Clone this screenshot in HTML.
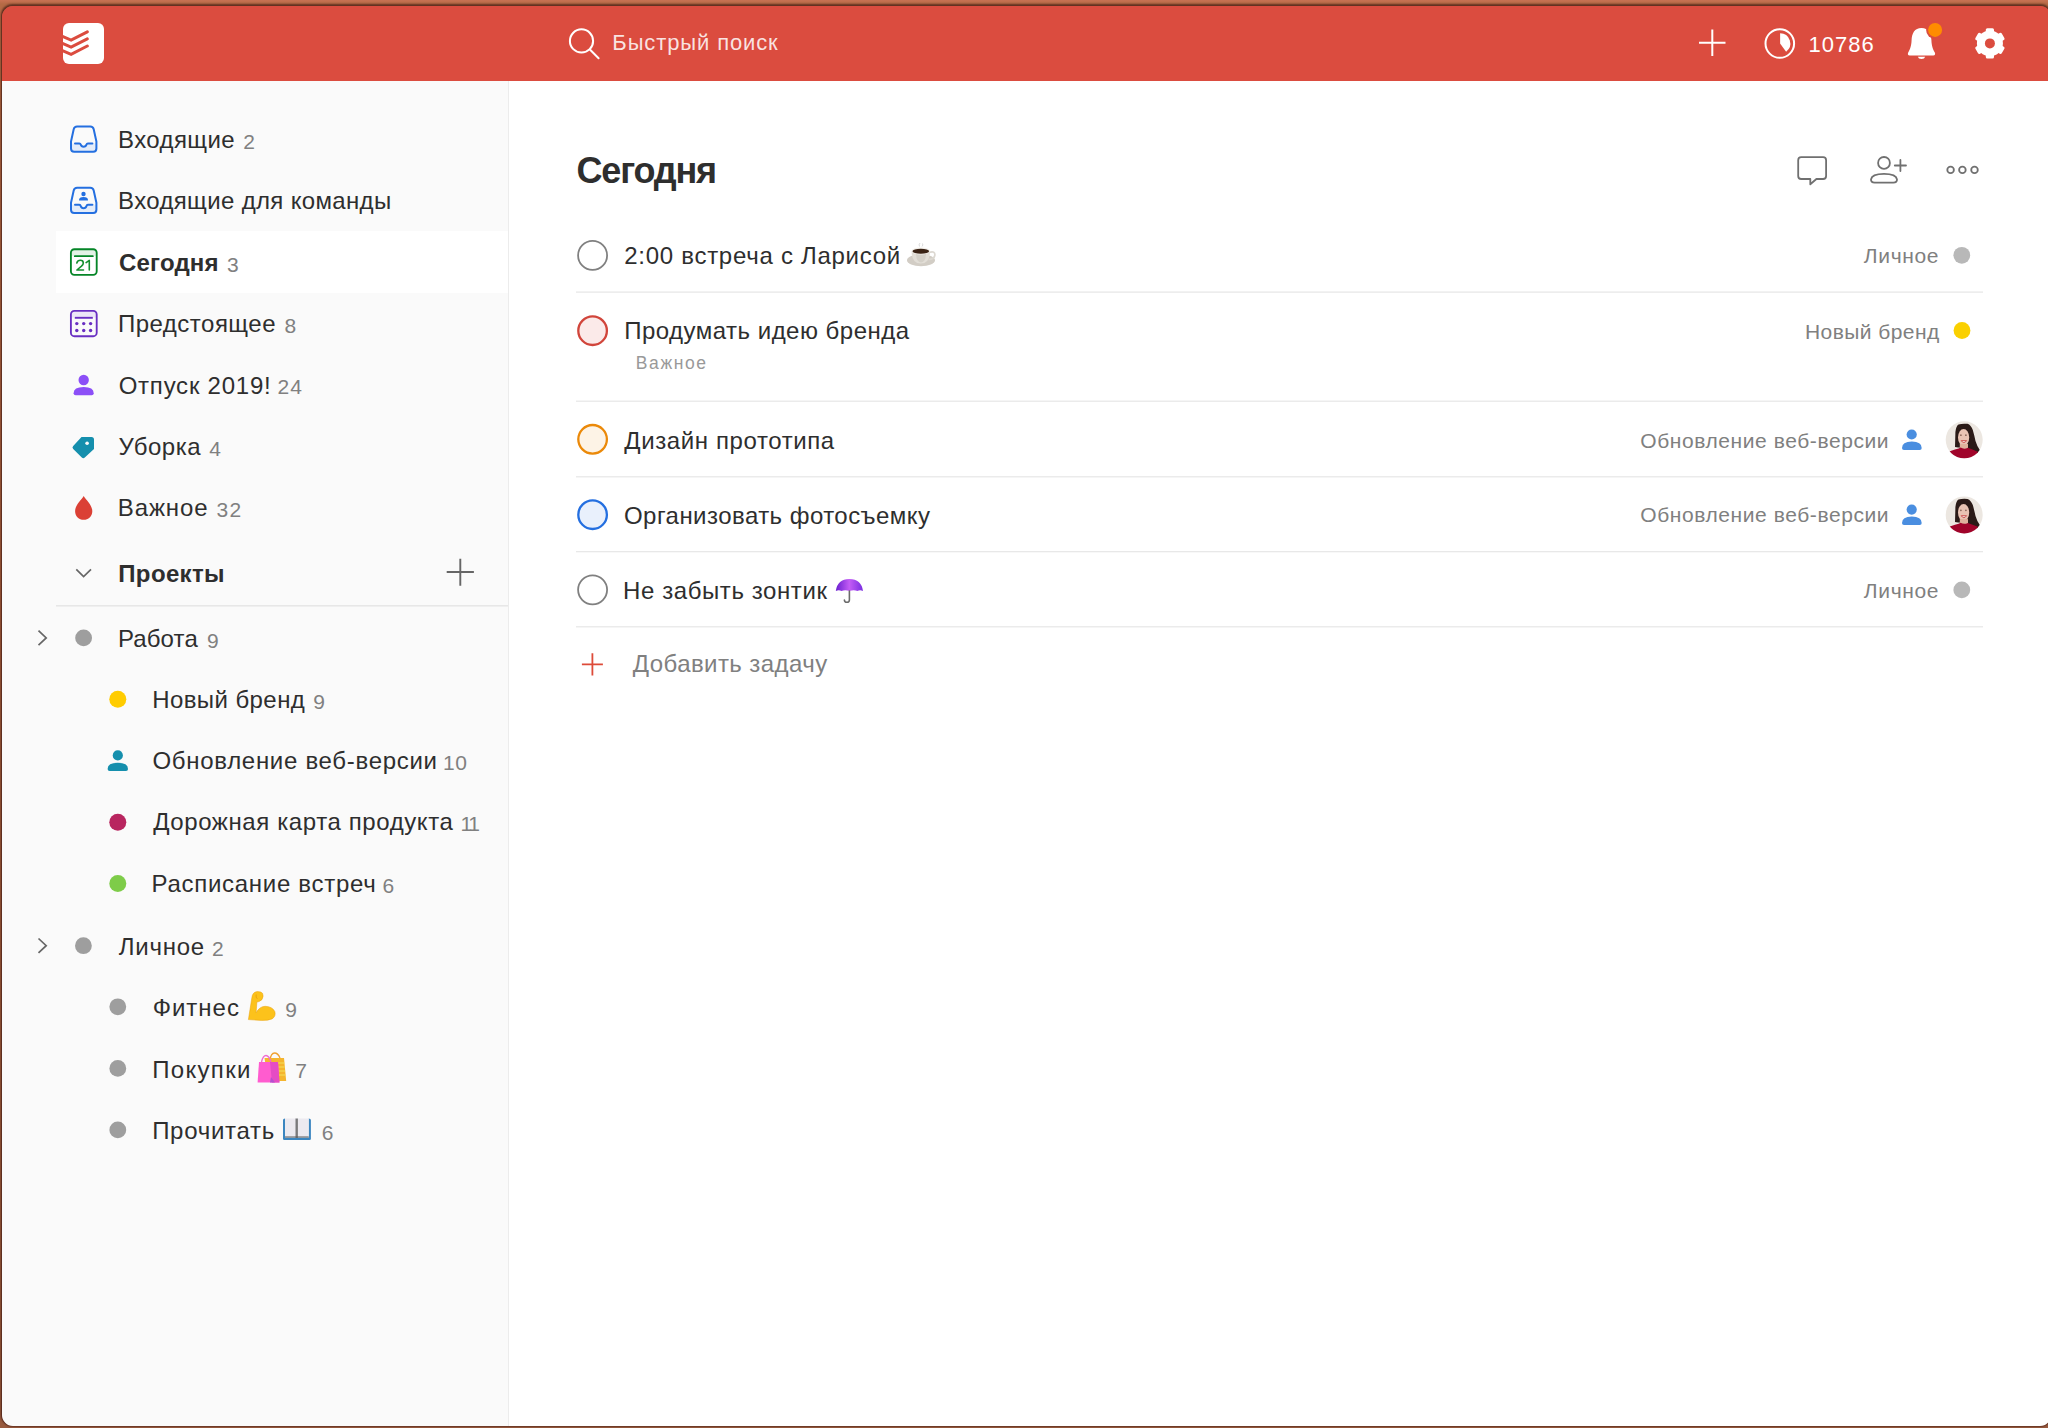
<!DOCTYPE html>
<html lang="ru">
<head>
<meta charset="utf-8">
<title>Todoist — Сегодня</title>
<style>
html,body{margin:0;padding:0;}
body{width:2048px;height:1428px;overflow:hidden;position:relative;
  background:linear-gradient(180deg,#c97253 0px,#b56a45 4px,#9e5a3c 700px,#985a3e 1428px);
  font-family:"Liberation Sans",sans-serif;}
.win{position:absolute;left:1.5px;top:6px;width:2049px;height:1419.5px;border-radius:11px;overflow:hidden;
  box-shadow:0 -1px 2px 0.5px rgba(70,30,20,0.75),0 1px 1px rgba(70,30,20,0.35),-1px 0 1px rgba(70,30,20,0.35);}
.main{position:absolute;left:507.5px;top:75px;width:1541px;height:1345px;background:#ffffff;}
.hdr{position:absolute;left:0;top:0;width:2049px;height:75px;background:#db4c3f;}
.side{position:absolute;left:0;top:75px;width:506.5px;height:1345px;background:#fafafa;border-right:1px solid #ececec;}
.sel{position:absolute;left:54.5px;top:150.3px;width:452px;height:61.7px;background:#ffffff;}
.t{position:absolute;white-space:nowrap;font-family:"Liberation Sans",sans-serif;}
svg.ic{position:absolute;left:0;top:0;overflow:visible;}
</style>
</head>
<body>
<div class="win">
  <div class="hdr"></div>
  <div class="main"></div>
  <div class="side"><div class="sel"></div></div>
</div>
<svg class="ic" width="2048" height="1428" viewBox="0 0 2048 1428">
  <defs>
    <clipPath id="logoclip"><rect x="63" y="23" width="41" height="41" rx="6"/></clipPath>
    <clipPath id="av1"><circle cx="1964.2" cy="439.8" r="18.5"/></clipPath>
    <clipPath id="av2"><circle cx="1964.2" cy="514.9" r="18.5"/></clipPath>
    <linearGradient id="umb" x1="0" y1="0" x2="1" y2="0">
      <stop offset="0" stop-color="#6a1fd0"/><stop offset="0.5" stop-color="#c35cf5"/><stop offset="1" stop-color="#7a2ee0"/>
    </linearGradient>
  </defs>

  <!-- ===== header ===== -->
  <rect x="63" y="23" width="41" height="41" rx="6" fill="#ffffff"/>
  <g clip-path="url(#logoclip)" fill="none" stroke="#db4c3f" stroke-width="3" stroke-linecap="round" stroke-linejoin="miter">
    <path d="M58 34.5 L71.1 40.1 L87.3 31.8"/>
    <path d="M58 41.6 L71.1 47.2 L87.3 38.9"/>
    <path d="M58 48.7 L71.1 54.3 L87.3 46"/>
  </g>
  <!-- search -->
  <g fill="none" stroke="#ffffff" stroke-width="2">
    <circle cx="581.5" cy="40.9" r="11.6"/>
    <path d="M589.9 49.5 L598.6 58.2" stroke-linecap="round"/>
  </g>
  <!-- plus -->
  <g stroke="#ffffff" stroke-width="2">
    <path d="M1712.3 29.5 V56 M1699 42.7 H1725.5"/>
  </g>
  <!-- karma -->
  <circle cx="1779.8" cy="43.5" r="14.3" fill="none" stroke="#ffffff" stroke-width="2"/>
  <path d="M1780.1 43.6 V33.3 A10.2 10.2 0 0 1 1786.1 51.7 Z" fill="#ffffff"/>
  <!-- bell -->
  <path d="M1921.5 27.9 C1914.5 27.9 1911.8 33.5 1911.6 40 C1911.4 46 1910 49.5 1908.3 52.2 C1907.4 53.7 1907.9 55.4 1909.7 55.4 L1933.3 55.4 C1935.1 55.4 1935.6 53.7 1934.7 52.2 C1933 49.5 1931.6 46 1931.4 40 C1931.2 33.5 1928.5 27.9 1921.5 27.9 Z" fill="#ffffff"/>
  <path d="M1917.8 56.8 A3.8 3 0 0 0 1925.2 56.8 Z" fill="#ffffff"/>
  <circle cx="1935.1" cy="29.9" r="9" fill="#db4c3f"/>
  <circle cx="1935.1" cy="29.9" r="7" fill="#ff8c00"/>
  <!-- gear -->
  <g fill="#ffffff">
    <circle cx="1989.9" cy="43.4" r="13"/>
    <rect x="1985.8" y="28.2" width="8.2" height="30.4" rx="1.5"/>
    <rect x="1985.8" y="28.2" width="8.2" height="30.4" rx="1.5" transform="rotate(60 1989.9 43.4)"/>
    <rect x="1985.8" y="28.2" width="8.2" height="30.4" rx="1.5" transform="rotate(120 1989.9 43.4)"/>
  </g>
  <circle cx="1989.9" cy="43.4" r="5" fill="#db4c3f"/>

  <!-- ===== sidebar icons ===== -->
  <!-- inbox -->
  <g transform="translate(69.5 125)">
    <path d="M1.5 18.5 H9.8 Q10.9 18.5 11.2 19.6 A3 3 0 0 0 17 19.6 Q17.3 18.5 18.4 18.5 H26.9 V23.5 Q26.9 26.75 23.7 26.75 H4.7 Q1.5 26.75 1.5 23.5 Z" fill="#e4ecf9"/>
    <path d="M1.5 16.5 L4.2 4.2 Q4.8 1.4 7.6 1.4 H20.8 Q23.6 1.4 24.2 4.2 L26.9 16.5 V23.5 Q26.9 26.75 23.7 26.75 H4.7 Q1.5 26.75 1.5 23.5 Z" fill="none" stroke="#246fe0" stroke-width="2" stroke-linejoin="round"/>
    <path d="M5.5 18.5 H9.8 Q10.9 18.5 11.2 19.6 A3 3 0 0 0 17 19.6 Q17.3 18.5 18.4 18.5 H22.9" fill="none" stroke="#246fe0" stroke-width="2" stroke-linecap="round"/>
  </g>
  <!-- team inbox -->
  <g transform="translate(69.5 186.3)">
    <path d="M1.5 18.5 H9.8 Q10.9 18.5 11.2 19.6 A3 3 0 0 0 17 19.6 Q17.3 18.5 18.4 18.5 H26.9 V23.5 Q26.9 26.75 23.7 26.75 H4.7 Q1.5 26.75 1.5 23.5 Z" fill="#e4ecf9"/>
    <path d="M1.5 16.5 L4.2 4.2 Q4.8 1.4 7.6 1.4 H20.8 Q23.6 1.4 24.2 4.2 L26.9 16.5 V23.5 Q26.9 26.75 23.7 26.75 H4.7 Q1.5 26.75 1.5 23.5 Z" fill="none" stroke="#246fe0" stroke-width="2" stroke-linejoin="round"/>
    <path d="M5.5 18.5 H9.8 Q10.9 18.5 11.2 19.6 A3 3 0 0 0 17 19.6 Q17.3 18.5 18.4 18.5 H22.9" fill="none" stroke="#246fe0" stroke-width="2" stroke-linecap="round"/>
    <circle cx="14" cy="7.7" r="2.2" fill="#246fe0"/>
    <path d="M9.5 13.8 Q9.5 10.6 14 10.6 Q18.5 10.6 18.5 13.8 Q18.5 14.3 18 14.3 H10 Q9.5 14.3 9.5 13.8 Z" fill="#246fe0"/>
  </g>
  <!-- today -->
  <g transform="translate(69.5 248)">
    <path d="M2 2 H26.5 V8 H2 Z" fill="#e3f2e6"/>
    <rect x="1.4" y="1.2" width="25.8" height="25.6" rx="3.5" fill="none" stroke="#058527" stroke-width="1.85"/>
    <path d="M5.3 8.15 H23.3" stroke="#058527" stroke-width="1.85" stroke-linecap="round"/>
    <path d="M7.3 15 Q8.1 12.3 10.8 12.3 Q13.8 12.3 13.8 14.9 Q13.8 16.5 12 18.2 L7.4 22 H14 M16.6 14.6 L19.8 12.4 V22" fill="none" stroke="#15902f" stroke-width="1.6" stroke-linecap="round" stroke-linejoin="round"/>
  </g>
  <!-- upcoming -->
  <g transform="translate(69.5 309.5)">
    <path d="M2 2 H26.5 V8 H2 Z" fill="#ece6f7"/>
    <rect x="1.4" y="1.4" width="25.8" height="25.3" rx="3.5" fill="none" stroke="#692fc2" stroke-width="1.85"/>
    <path d="M5.3 8.3 H23.3" stroke="#692fc2" stroke-width="1.9"/>
    <g fill="#692fc2">
      <circle cx="7.3" cy="14.1" r="1.7"/><circle cx="14.2" cy="14.1" r="1.7"/><circle cx="21.1" cy="14.1" r="1.7"/>
      <circle cx="7.3" cy="21" r="1.7"/><circle cx="14.2" cy="21" r="1.7"/><circle cx="21.1" cy="21" r="1.7"/>
    </g>
  </g>
  <!-- vacation person -->
  <g fill="#8c4ff7">
    <circle cx="83.7" cy="380" r="5.2"/>
    <path d="M73.6 393.3 Q73.6 386.9 83.7 386.9 Q93.7 386.9 93.7 393.3 Q93.7 395.3 91.7 395.3 H75.6 Q73.6 395.3 73.6 393.3 Z"/>
  </g>
  <!-- tag -->
  <path d="M81.5 437 H91.5 Q94 437 94 439.5 V449 L84.8 457.5 Q83.3 458.9 81.8 457.5 L73.2 449 Q71.7 447.5 73.2 446 Z" fill="#158fad"/>
  <circle cx="87.1" cy="443.3" r="1.8" fill="#fafafa"/>
  <!-- drop -->
  <path d="M83.7 496 C86 500 92.3 505 92.3 511.2 C92.3 516.3 88.4 519.8 83.7 519.8 C79 519.8 75.1 516.3 75.1 511.2 C75.1 505 81.4 500 83.7 496 Z" fill="#db4035"/>
  <!-- projects chevron down -->
  <path d="M76.3 569.4 L83.6 576.5 L91 569.4" fill="none" stroke="#666666" stroke-width="1.7"/>
  <!-- projects plus -->
  <path d="M460.3 558.7 V585.7 M446.7 572 H473.9" stroke="#666666" stroke-width="1.9"/>
  <!-- divider -->
  <rect x="56" y="605.2" width="452" height="1.3" fill="#e3e3e3"/>
  <!-- chevrons right -->
  <path d="M38.5 630.7 L46.2 637.9 L38.5 645.1" fill="none" stroke="#666666" stroke-width="1.7"/>
  <path d="M38.5 938.5 L46.2 945.7 L38.5 952.9" fill="none" stroke="#666666" stroke-width="1.7"/>
  <!-- project dots -->
  <circle cx="83.6" cy="637.9" r="8.4" fill="#9e9e9e"/>
  <circle cx="117.8" cy="699.2" r="8.5" fill="#ffcc00"/>
  <g fill="#158fad">
    <circle cx="117.8" cy="755.4" r="5.1"/>
    <path d="M107.6 769 Q107.6 762.8 117.8 762.8 Q128 762.8 128 769 Q128 771 126 771 H109.6 Q107.6 771 107.6 769 Z"/>
  </g>
  <circle cx="117.8" cy="822.3" r="8.5" fill="#b8255f"/>
  <circle cx="117.8" cy="883.5" r="8.5" fill="#7ecc49"/>
  <circle cx="83.4" cy="945.7" r="8.4" fill="#9e9e9e"/>
  <circle cx="117.8" cy="1006.8" r="8.4" fill="#9e9e9e"/>
  <circle cx="117.8" cy="1068.4" r="8.4" fill="#9e9e9e"/>
  <circle cx="117.8" cy="1129.9" r="8.4" fill="#9e9e9e"/>

  <!-- ===== main ===== -->
  <!-- header icons -->
  <g fill="none" stroke="#707070" stroke-width="1.8" stroke-linejoin="round">
    <path d="M1801.2 157.2 H1823.1 Q1826.1 157.2 1826.1 160.2 V176 Q1826.1 179 1823.1 179 H1816.4 L1810.3 184.3 V179 H1801.2 Q1798.2 179 1798.2 176 V160.2 Q1798.2 157.2 1801.2 157.2 Z"/>
    <circle cx="1884" cy="162.9" r="5.9"/>
    <path d="M1874.6 182.6 H1893.4 Q1897.2 182.6 1897 179.3 Q1896.2 173.8 1884 173.8 Q1871.8 173.8 1871 179.3 Q1870.8 182.6 1874.6 182.6 Z"/>
    <path d="M1900.4 159.9 V171.1 M1894.8 165.5 H1906" stroke-linecap="round"/>
    <circle cx="1950.6" cy="169.9" r="3.3"/>
    <circle cx="1962.4" cy="169.9" r="3.3"/>
    <circle cx="1974.5" cy="169.9" r="3.3"/>
  </g>
  <!-- dividers -->
  <g fill="#e6e6e6">
    <rect x="576" y="291.5" width="1407" height="1.2"/>
    <rect x="576" y="400.6" width="1407" height="1.2"/>
    <rect x="576" y="476.2" width="1407" height="1.2"/>
    <rect x="576" y="551.1" width="1407" height="1.2"/>
    <rect x="576" y="626.2" width="1407" height="1.2"/>
  </g>
  <!-- task circles -->
  <circle cx="592.6" cy="255.4" r="14.5" fill="none" stroke="#808080" stroke-width="1.8"/>
  <circle cx="592.6" cy="330.7" r="14.3" fill="#fbeae9" stroke="#d1453b" stroke-width="2.3"/>
  <circle cx="592.6" cy="439.3" r="14.3" fill="#fdf3e6" stroke="#eb8909" stroke-width="2.3"/>
  <circle cx="592.6" cy="514.7" r="14.3" fill="#e9f0fc" stroke="#246fe0" stroke-width="2.3"/>
  <circle cx="592.6" cy="589.8" r="14.5" fill="none" stroke="#808080" stroke-width="1.8"/>
  <!-- add task plus -->
  <path d="M592.4 653.3 V675.4 M581.9 664.3 H602.9" stroke="#dd4b39" stroke-width="1.8"/>
  <!-- right project dots -->
  <circle cx="1961.8" cy="255.3" r="8.4" fill="#b8b8b8"/>
  <circle cx="1962" cy="330.5" r="8.4" fill="#fad000"/>
  <circle cx="1961.8" cy="589.9" r="8.4" fill="#b8b8b8"/>
  <!-- shared person icons -->
  <g fill="#4a8ee0">
    <circle cx="1911.7" cy="434.5" r="5.1"/>
    <path d="M1902 447.9 Q1902 441.4 1911.8 441.4 Q1921.7 441.4 1921.7 447.9 Q1921.7 449.9 1919.7 449.9 H1904 Q1902 449.9 1902 447.9 Z"/>
    <circle cx="1911.7" cy="509.6" r="5.1"/>
    <path d="M1902 523 Q1902 516.5 1911.8 516.5 Q1921.7 516.5 1921.7 523 Q1921.7 525 1919.7 525 H1904 Q1902 525 1902 523 Z"/>
  </g>
  <!-- avatars -->
  <g clip-path="url(#av1)">
    <rect x="1945" y="420.0" width="40" height="40" fill="#ece7e1"/>
    <path d="M1955 447.0 L1955.4 432.0 Q1956 426.0 1958.5 424.5 Q1962 423.3 1967.5 423.8 Q1971 425.0 1972.8 430.0 Q1974.5 436.0 1975.5 441.0 Q1977 446.0 1979.5 449.5 L1980.5 452.5 Q1977 454.0 1972 451.5 L1967 448.0 L1958 447.5 Z" fill="#2a1a17"/>
    <ellipse cx="1963.6" cy="437.4" rx="5.6" ry="8.4" fill="#e9c3b3"/>
    <rect x="1959.8" y="444.0" width="8.2" height="5.5" fill="#dfb29c"/>
    <circle cx="1960.9" cy="435.2" r="0.9" fill="#8d6a5c"/><circle cx="1965.9" cy="435.2" r="0.9" fill="#8d6a5c"/>
    <path d="M1961.2 440.6 Q1963.8 444.5 1966.6 440.6 Z" fill="#efe6e4" stroke="#cc4a46" stroke-width="0.9"/>
    <path d="M1944 462.0 V455.0 Q1949 451.0 1955 449.6 Q1959.5 448.4 1960.6 447.6 Q1964 449.8 1967.8 447.8 Q1972 449.0 1976 451.0 Q1982 453.5 1986 458.0 V462.0 Z" fill="#a0042a"/>
  </g>
  <g clip-path="url(#av2)">
    <rect x="1945" y="495.1" width="40" height="40" fill="#ece7e1"/>
    <path d="M1955 522.1 L1955.4 507.1 Q1956 501.1 1958.5 499.6 Q1962 498.4 1967.5 498.9 Q1971 500.1 1972.8 505.1 Q1974.5 511.1 1975.5 516.1 Q1977 521.1 1979.5 524.6 L1980.5 527.6 Q1977 529.1 1972 526.6 L1967 523.1 L1958 522.6 Z" fill="#2a1a17"/>
    <ellipse cx="1963.6" cy="512.5" rx="5.6" ry="8.4" fill="#e9c3b3"/>
    <rect x="1959.8" y="519.1" width="8.2" height="5.5" fill="#dfb29c"/>
    <circle cx="1960.9" cy="510.3" r="0.9" fill="#8d6a5c"/><circle cx="1965.9" cy="510.3" r="0.9" fill="#8d6a5c"/>
    <path d="M1961.2 515.7 Q1963.8 519.6 1966.6 515.7 Z" fill="#efe6e4" stroke="#cc4a46" stroke-width="0.9"/>
    <path d="M1944 537.1 V530.1 Q1949 526.1 1955 524.7 Q1959.5 523.5 1960.6 522.7 Q1964 524.9 1967.8 522.9 Q1972 524.1 1976 526.1 Q1982 528.6 1986 533.1 V537.1 Z" fill="#a0042a"/>
  </g>

  <!-- emoji: coffee -->
  <g>
    <ellipse cx="921" cy="260.3" rx="14" ry="6" fill="#d2cdc5"/>
    <path d="M929 252.5 Q935.5 250.5 934.8 255.5 Q934 259.5 928.5 259.3" fill="none" stroke="#dcd8d1" stroke-width="1.7"/>
    <path d="M911.6 251 Q911.6 263.6 920.8 263.6 Q930 263.6 930 251 Z" fill="#e2ded7"/>
    <path d="M916 253 Q916 262 921 262.5 Q926 262 926 253 Z" fill="#cfcac2" opacity="0.7"/>
    <ellipse cx="920.8" cy="251" rx="9.2" ry="3.4" fill="#f3f0eb"/>
    <ellipse cx="920.8" cy="251.3" rx="8.3" ry="2.5" fill="#3a2315"/>
    <path d="M919.5 246.5 Q918.5 244.5 920 243 M922 246.5 Q923.5 245 922.5 243.5" fill="none" stroke="#cfcfcf" stroke-width="0.8"/>
  </g>
  <!-- emoji: umbrella -->
  <g>
    <path d="M835.8 591 Q837.5 579 849.4 579 Q861.3 579 863 591 Q860 589.5 857.4 591 Q854 589.5 849.4 591 Q845 589.5 841.5 591 Q838.8 589.5 835.8 591 Z" fill="url(#umb)"/>
    <path d="M849.4 591 V600 Q849.4 602.3 846.9 602.3 Q844.4 602.3 844.4 600" fill="none" stroke="#6b6b6b" stroke-width="1.6" stroke-linecap="round"/>
  </g>
  <!-- emoji: muscle -->
  <path d="M248.4 1019.6 L251.9 997.5 Q252.4 992.2 257.3 991.5 L260.8 992 Q263.3 992.8 263.1 996.2 Q262.8 1000.3 259 1001.6 L256.9 1002 L256.1 1012.8 Q259.6 1006.3 265.2 1006.3 Q272.3 1006.5 274.8 1011.5 Q276.2 1016.3 272.1 1018.9 Q268 1020.6 261.5 1020.4 Z" fill="#fcc21b" stroke="#e9a00c" stroke-width="0.5"/>
  <path d="M256.2 994.5 Q255.5 997.5 257.3 998.8" fill="none" stroke="#e9a00c" stroke-width="0.9"/>
  <!-- emoji: shopping bags -->
  <g>
    <path d="M270 1060 Q271 1053 274.5 1053 Q278 1053 280 1058" fill="none" stroke="#f0a030" stroke-width="1.3"/>
    <path d="M264.5 1058 L284 1058 L286.2 1081 L268 1081 Z" fill="#f5b52e"/>
    <path d="M272 1063 L284.3 1063 M272 1067 L284.7 1067 M272 1071 L285.1 1071 M272 1075 L285.5 1075" stroke="#f3e05a" stroke-width="1.2"/>
    <path d="M261.5 1062 Q263 1055.5 266 1055.5 Q269 1055.5 271 1062" fill="none" stroke="#f06ad0" stroke-width="1.3"/>
    <path d="M259 1062 L278 1062 L279.5 1082.5 L257.6 1082.5 Z" fill="#ff5ccf"/>
    <path d="M270 1062 L278 1062 L279.5 1082.5 L272 1082.5 Z" fill="#e54cc4"/>
    <path d="M271 1077 L275 1082.5 L270 1082.5 Z" fill="#b550d0"/>
  </g>
  <!-- emoji: book -->
  <g>
    <path d="M283 1120 Q283 1118.5 285 1118.5 L285 1137.5 L296.5 1137.5 L308.7 1137.5 L308.7 1118.5 Q310.9 1118.5 310.9 1120 L310.9 1139 Q310.9 1140 309.5 1140 L284.4 1140 Q283 1140 283 1139 Z" fill="#3b86c0"/>
    <rect x="285" y="1118.5" width="11" height="19" fill="#eceaf0"/>
    <rect x="297.5" y="1118.5" width="11.2" height="19" fill="#eceaf0"/>
    <rect x="295.5" y="1118.5" width="2.4" height="19.5" fill="#7a7a7c"/>
    <path d="M285 1137 H308.7" stroke="#5a5a5a" stroke-width="1"/>
  </g>
</svg>
<div class="t" style="left:118.10px;top:128.28px;font-size:24px;line-height:24px;color:#2e2e2e;font-weight:400;letter-spacing:0.393px;">Входящие</div>
<div class="t" style="left:243.20px;top:130.82px;font-size:21px;line-height:21px;color:#808080;font-weight:400;letter-spacing:0px;">2</div>
<div class="t" style="left:118.10px;top:189.08px;font-size:24px;line-height:24px;color:#2e2e2e;font-weight:400;letter-spacing:0.342px;">Входящие для команды</div>
<div class="t" style="left:119.10px;top:251.38px;font-size:24px;line-height:24px;color:#2e2e2e;font-weight:700;letter-spacing:0.158px;">Сегодня</div>
<div class="t" style="left:227.05px;top:253.92px;font-size:21px;line-height:21px;color:#808080;font-weight:400;letter-spacing:0px;">3</div>
<div class="t" style="left:117.93px;top:312.38px;font-size:24px;line-height:24px;color:#2e2e2e;font-weight:400;letter-spacing:0.495px;">Предстоящее</div>
<div class="t" style="left:284.52px;top:314.92px;font-size:21px;line-height:21px;color:#808080;font-weight:400;letter-spacing:0px;">8</div>
<div class="t" style="left:118.68px;top:373.78px;font-size:24px;line-height:24px;color:#2e2e2e;font-weight:400;letter-spacing:0.766px;">Отпуск 2019!</div>
<div class="t" style="left:277.60px;top:376.32px;font-size:21px;line-height:21px;color:#808080;font-weight:400;letter-spacing:1.05px;">24</div>
<div class="t" style="left:118.48px;top:435.08px;font-size:24px;line-height:24px;color:#2e2e2e;font-weight:400;letter-spacing:0.5px;">Уборка</div>
<div class="t" style="left:209.30px;top:437.62px;font-size:21px;line-height:21px;color:#808080;font-weight:400;letter-spacing:0px;">4</div>
<div class="t" style="left:117.80px;top:496.48px;font-size:24px;line-height:24px;color:#2e2e2e;font-weight:400;letter-spacing:0.87px;">Важное</div>
<div class="t" style="left:216.55px;top:499.02px;font-size:21px;line-height:21px;color:#808080;font-weight:400;letter-spacing:1.2px;">32</div>
<div class="t" style="left:118.27px;top:561.98px;font-size:24px;line-height:24px;color:#2e2e2e;font-weight:700;letter-spacing:0.354px;">Проекты</div>
<div class="t" style="left:117.90px;top:626.98px;font-size:24px;line-height:24px;color:#2e2e2e;font-weight:400;letter-spacing:0.13px;">Работа</div>
<div class="t" style="left:207.00px;top:629.52px;font-size:21px;line-height:21px;color:#808080;font-weight:400;letter-spacing:0px;">9</div>
<div class="t" style="left:152.20px;top:688.18px;font-size:24px;line-height:24px;color:#2e2e2e;font-weight:400;letter-spacing:0.417px;">Новый бренд</div>
<div class="t" style="left:313.30px;top:690.72px;font-size:21px;line-height:21px;color:#808080;font-weight:400;letter-spacing:0px;">9</div>
<div class="t" style="left:152.48px;top:749.48px;font-size:24px;line-height:24px;color:#2e2e2e;font-weight:400;letter-spacing:0.697px;">Обновление веб-версии</div>
<div class="t" style="left:442.98px;top:752.02px;font-size:21px;line-height:21px;color:#808080;font-weight:400;letter-spacing:0.525px;">10</div>
<div class="t" style="left:153.17px;top:810.38px;font-size:24px;line-height:24px;color:#2e2e2e;font-weight:400;letter-spacing:0.6px;">Дорожная карта продукта</div>
<div class="t" style="left:460.58px;top:812.92px;font-size:21px;line-height:21px;color:#808080;font-weight:400;letter-spacing:-2.425px;">11</div>
<div class="t" style="left:151.60px;top:872.48px;font-size:24px;line-height:24px;color:#2e2e2e;font-weight:400;letter-spacing:0.703px;">Расписание встреч</div>
<div class="t" style="left:382.40px;top:875.02px;font-size:21px;line-height:21px;color:#808080;font-weight:400;letter-spacing:0px;">6</div>
<div class="t" style="left:118.75px;top:934.98px;font-size:24px;line-height:24px;color:#2e2e2e;font-weight:400;letter-spacing:0.75px;">Личное</div>
<div class="t" style="left:212.10px;top:937.52px;font-size:21px;line-height:21px;color:#808080;font-weight:400;letter-spacing:0px;">2</div>
<div class="t" style="left:152.63px;top:995.98px;font-size:24px;line-height:24px;color:#2e2e2e;font-weight:400;letter-spacing:1.01px;">Фитнес</div>
<div class="t" style="left:285.20px;top:998.52px;font-size:21px;line-height:21px;color:#808080;font-weight:400;letter-spacing:0px;">9</div>
<div class="t" style="left:152.13px;top:1057.58px;font-size:24px;line-height:24px;color:#2e2e2e;font-weight:400;letter-spacing:1.342px;">Покупки</div>
<div class="t" style="left:295.18px;top:1060.12px;font-size:21px;line-height:21px;color:#808080;font-weight:400;letter-spacing:0px;">7</div>
<div class="t" style="left:152.13px;top:1118.98px;font-size:24px;line-height:24px;color:#2e2e2e;font-weight:400;letter-spacing:0.725px;">Прочитать</div>
<div class="t" style="left:321.70px;top:1121.52px;font-size:21px;line-height:21px;color:#808080;font-weight:400;letter-spacing:0px;">6</div>
<div class="t" style="left:576.60px;top:152.63px;font-size:36px;line-height:36px;color:#2e2e2e;font-weight:700;letter-spacing:-1.221px;">Сегодня</div>
<div class="t" style="left:624.25px;top:244.18px;font-size:24px;line-height:24px;color:#2e2e2e;font-weight:400;letter-spacing:0.72px;">2:00 встреча с Ларисой</div>
<div class="t" style="left:624.22px;top:319.18px;font-size:24px;line-height:24px;color:#2e2e2e;font-weight:400;letter-spacing:0.488px;">Продумать идею бренда</div>
<div class="t" style="left:624.37px;top:428.68px;font-size:24px;line-height:24px;color:#2e2e2e;font-weight:400;letter-spacing:0.603px;">Дизайн прототипа</div>
<div class="t" style="left:623.98px;top:503.78px;font-size:24px;line-height:24px;color:#2e2e2e;font-weight:400;letter-spacing:0.456px;">Организовать фотосъемку</div>
<div class="t" style="left:623.10px;top:578.68px;font-size:24px;line-height:24px;color:#2e2e2e;font-weight:400;letter-spacing:0.583px;">Не забыть зонтик</div>
<div class="t" style="left:635.83px;top:355.39px;font-size:17.5px;line-height:17.5px;color:#999999;font-weight:400;letter-spacing:1.575px;">Важное</div>
<div class="t" style="left:632.87px;top:652.28px;font-size:24px;line-height:24px;color:#808080;font-weight:400;letter-spacing:0.418px;">Добавить задачу</div>
<div class="t" style="right:108.90px;top:245.22px;font-size:21px;line-height:21px;color:#808080;font-weight:400;letter-spacing:0.645px">Личное</div>
<div class="t" style="right:108.40px;top:320.72px;font-size:21px;line-height:21px;color:#808080;font-weight:400;letter-spacing:0.425px">Новый бренд</div>
<div class="t" style="right:158.90px;top:430.02px;font-size:21px;line-height:21px;color:#808080;font-weight:400;letter-spacing:0.573px">Обновление веб-версии</div>
<div class="t" style="right:158.90px;top:504.42px;font-size:21px;line-height:21px;color:#808080;font-weight:400;letter-spacing:0.573px">Обновление веб-версии</div>
<div class="t" style="right:108.90px;top:579.92px;font-size:21px;line-height:21px;color:#808080;font-weight:400;letter-spacing:0.645px">Личное</div>
<div class="t" style="left:612.35px;top:32.48px;font-size:22px;line-height:22px;color:rgba(255,255,255,0.85);font-weight:400;letter-spacing:0.879px;">Быстрый поиск</div>
<div class="t" style="left:1808.57px;top:33.88px;font-size:22px;line-height:22px;color:#ffffff;font-weight:400;letter-spacing:0.969px;">10786</div>
</body>
</html>
